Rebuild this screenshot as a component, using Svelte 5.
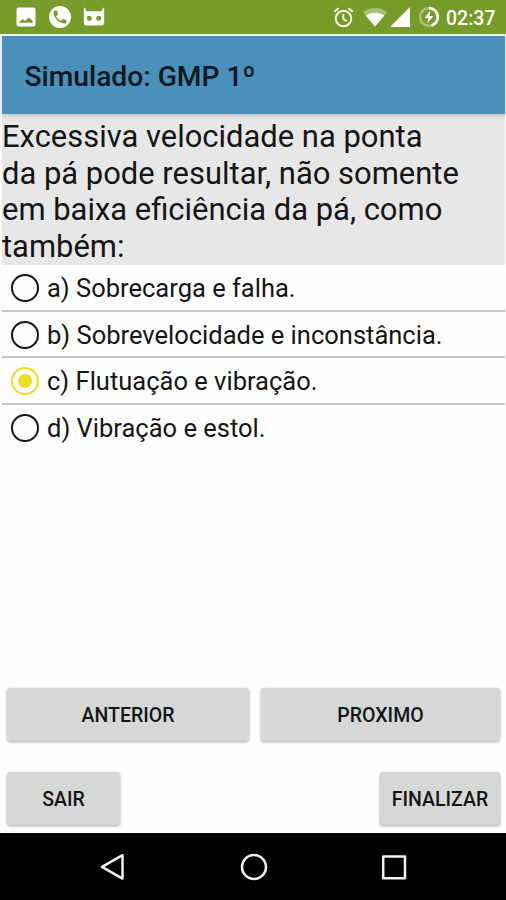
<script lang="ts">
	const question = [
		'Excessiva velocidade na ponta',
		'da pá pode resultar, não somente',
		'em baixa eficiência da pá, como',
		'também:'
	];

	const options = [
		{ id: 'a', text: 'Sobrecarga e falha.' },
		{ id: 'b', text: 'Sobrevelocidade e inconstância.' },
		{ id: 'c', text: 'Flutuação e vibração.' },
		{ id: 'd', text: 'Vibração e estol.' }
	];

	let selected = $state('c');
</script>

<div class="screen">
	<div class="status">
		<div class="icons left">
			<svg width="20" height="20" viewBox="0 0 20 20">
				<path fill="#fff" fill-rule="evenodd" d="M2.5 0.5h15a2 2 0 0 1 2 2v15a2 2 0 0 1-2 2h-15a2 2 0 0 1-2-2v-15a2 2 0 0 1 2-2zM3.5 15.8h13v-2l-3.700-3.400-3.700 3.600-2.300-2-3.300 2.800z" />
			</svg>
			<svg width="24" height="24" viewBox="0 0 24 24">
				<circle cx="12" cy="12" r="11" fill="#fff" />
				<path fill="#779b29" transform="translate(3.4 3.6) scale(.71)" d="M6.6 10.8c1.4 2.8 3.8 5.1 6.6 6.6l2.2-2.2c.3-.3.7-.4 1-.2 1.1.4 2.3.6 3.6.6.6 0 1 .4 1 1V20c0 .6-.4 1-1 1C10.6 21 3 13.4 3 4c0-.6.4-1 1-1h3.5c.6 0 1 .4 1 1 0 1.300.2 2.5.6 3.6.1.3 0 .7-.2 1z" />
			</svg>
			<svg width="22" height="20" viewBox="0 0 22 20">
				<path fill="#fff" fill-rule="evenodd" d="M1.800 0.500L3.600 4.200H18.400L20.200 0.500L21.200 1.200V6V15.500a3 3 0 0 1-3 3H3.800a3 3 0 0 1-3-3V1.200zM6.300 8.800a2.500 2.500 0 1 0 0 5 2.500 2.500 0 1 0 0-5zM15.700 8.800a2.500 2.500 0 1 0 0 5 2.500 2.500 0 1 0 0-5z" />
			</svg>
		</div>
		<div class="icons right">
			<svg width="21" height="21" viewBox="0 0 21 21" fill="none" stroke="#f5fae8" stroke-width="1.9">
				<circle cx="10.5" cy="11.5" r="7.8" />
				<path d="M10.300 7v5l3.500 2.200M1.200 4.800L5.500 1.200M19.800 4.800L15.500 1.200" />
			</svg>
			<svg class="wifi" width="24" height="19" viewBox="0 0 24 19">
				<path fill="#a8c071" d="M0 4.300C7-1.300 17-1.300 24 4.300L12 18.500z" />
				<path fill="#fff" d="M2.600 7.400C8 3.900 16 3.900 21.400 7.400L12 18.500z" />
			</svg>
			<svg class="signal" width="20" height="20" viewBox="0 0 20 20">
				<path fill="#fff" d="M20 0v20H0z" />
			</svg>
			<svg class="battery" width="22" height="22" viewBox="0 0 22 22" fill="none" stroke-width="2.6">
				<circle cx="11" cy="11" r="8.9" stroke="#a8c071" />
				<path stroke="#fff" d="M11 2.100a8.900 8.900 0 0 1 2.500 17.400" />
				<path fill="#fff" d="M12.300 4.500L6.500 12h3.800l-1 5.500 6-7.500h-3.800z" />
			</svg>
			<span class="clock">02:37</span>
		</div>
	</div>

	<header>Simulado: GMP 1º</header>

	<div class="question">
		{#each question as line}
			<div>{line}</div>
		{/each}
	</div>

	<div class="options">
		{#each options as option (option.id)}
			<label class="option" class:checked={selected === option.id}>
				<input type="radio" name="answer" value={option.id} bind:group={selected} />
				<span class="dot"></span>
				<span>{option.id}) {option.text}</span>
			</label>
		{/each}
	</div>

	<div class="actions">
		<div class="row">
			<button class="prev">ANTERIOR</button>
			<button class="next">PROXIMO</button>
		</div>
		<div class="row">
			<button class="exit">SAIR</button>
			<button class="finish">FINALIZAR</button>
		</div>
	</div>

	<nav>
		<svg width="28" height="28" viewBox="0 0 28 28"><path d="M23.5 2.200v23.400L3 13.900z" /></svg>
		<svg width="28" height="28" viewBox="0 0 28 28"><circle cx="14" cy="14" r="12" /></svg>
		<svg width="28" height="28" viewBox="0 0 28 28"><path d="M3.200 3.500h21.800v21.800H3.200z" /></svg>
	</nav>
</div>

<style>
	:global(body) {
		margin: 0;
		background: #fefefe;
	}

	.screen {
		display: flex;
		flex-direction: column;
		width: 506px;
		height: 900px;
		overflow: hidden;
		background: #fefefe;
		color: #151515;
		font-family: Roboto, sans-serif;
	}

	svg {
		display: block;
		flex: none;
	}

	.status {
		display: flex;
		justify-content: space-between;
		box-sizing: border-box;
		height: 34px;
		padding: 0 10px 0 16px;
		background: #779b29;
		color: #fff;
	}

	.icons {
		display: flex;
		align-items: center;
	}

	.left {
		gap: 11.5px;
	}

	.wifi {
		margin-left: 9px;
	}

	.signal {
		margin-left: 3px;
	}

	.battery {
		margin-left: 8px;
	}

	.clock {
		width: 50px;
		margin: 2px 0 0 6px;
		font-size: 19.5px;
		font-weight: 500;
		white-space: nowrap;
	}

	header {
		position: relative;
		box-sizing: border-box;
		height: 78px;
		margin: 2px 1px 0 2px;
		padding-left: 22.5px;
		background: #4a90ba;
		box-shadow: 0 1px 4px rgba(0, 0, 0, 0.22);
		color: #081820;
		font-size: 28.2px;
		font-weight: 500;
		line-height: 82px;
	}

	.question {
		box-sizing: border-box;
		height: 151px;
		margin: 0 1px 0 2px;
		padding-top: 5px;
		background: #e7e7e7;
		font-size: 30.95px;
		line-height: 36.6px;
		white-space: nowrap;
	}

	.options {
		margin: 0 1px 0 2px;
	}

	.option {
		display: flex;
		align-items: center;
		box-sizing: border-box;
		height: 46.5px;
		padding: 2px 0 0 9px;
		border-bottom: 2px solid #c6c6c6;
		font-size: 25.5px;
		white-space: nowrap;
	}

	.option:last-child {
		border-bottom-color: transparent;
	}

	input {
		position: absolute;
		opacity: 0;
	}

	.dot {
		display: flex;
		align-items: center;
		justify-content: center;
		box-sizing: border-box;
		width: 28px;
		height: 28px;
		margin-right: 8px;
		border: 2.5px solid #151515;
		border-radius: 50%;
	}

	.checked .dot {
		border-color: #e8df27;
	}

	.checked .dot::after {
		content: '';
		width: 14px;
		height: 14px;
		border-radius: 50%;
		background: #e8df27;
	}

	.actions {
		display: flex;
		flex-direction: column;
		gap: 31px;
		margin-top: auto;
		padding: 0 6px 8px 7px;
	}

	.row {
		display: flex;
		justify-content: space-between;
	}

	button {
		height: 53px;
		padding: 1px 0 0;
		border: none;
		border-radius: 3px;
		background: #d6d8d7;
		box-shadow: 0 1px 3px rgba(0, 0, 0, 0.35);
		color: #151515;
		font-family: inherit;
		font-size: 19.5px;
		font-weight: 500;
	}

	.prev {
		width: 242px;
	}

	.next {
		width: 239px;
	}

	.exit {
		width: 113px;
	}

	.finish {
		width: 120px;
	}

	nav {
		display: flex;
		flex: none;
		align-items: center;
		justify-content: center;
		gap: 112.5px;
		box-sizing: border-box;
		height: 67px;
		padding-left: 1px;
		background: #000;
	}

	nav path,
	nav circle {
		fill: none;
		stroke: #f2f2f2;
		stroke-width: 2.5;
		stroke-linejoin: round;
	}
</style>
